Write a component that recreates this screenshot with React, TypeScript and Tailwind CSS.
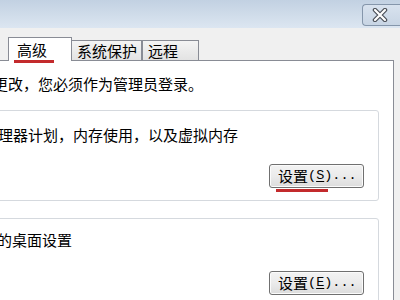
const cjk = { fontFamily: '"Noto Sans CJK SC", "Liberation Sans", sans-serif' }
const mono = { fontFamily: '"Liberation Mono", monospace' }

const CloseGlyph = () => (
  <svg width="16" height="14" viewBox="0 0 16 14">
    <path d="M3 2 L13 12 M13 2 L3 12" stroke="#4a4f57" strokeWidth="4.5" strokeLinecap="round" />
    <path d="M3 2 L13 12 M13 2 L3 12" stroke="#ffffff" strokeWidth="2.2" strokeLinecap="round" />
  </svg>
)

const Tab = ({ label, active, className }: { label: string; active?: boolean; className?: string }) =>
  active ? (
    <div
      className={`relative z-10 -mb-px flex h-[24px] items-start border border-b-0 border-[#898c95] bg-white pl-[8px] pt-[2px] text-[15px] leading-[20px] text-black ${className ?? ''}`}
    >
      {label}
      <div className="absolute left-[5px] top-[22px] h-[3px] w-[40px] bg-[#c32a2c]" />
    </div>
  ) : (
    <div
      className={`flex h-[20px] items-center border border-b-0 border-[#898c95] bg-gradient-to-b from-[#f4f4f4] to-[#e3e3e3] pl-[5px] text-[15px] leading-[18px] text-black ${className ?? ''}`}
    >
      {label}
    </div>
  )

const SetupButton = ({ hotkey, marked }: { hotkey: string; marked?: boolean }) => (
  <div className="flex justify-end pr-[14px]">
    <div className="relative">
      <button className="flex h-[24px] w-[95px] items-center rounded-[3px] border border-[#707070] bg-gradient-to-b from-[#f3f3f3] via-[#ebebeb] to-[#dcdcdc] pl-[8px] text-[15px] leading-[18px] text-black shadow-[inset_0_0_0_1px_#fbfbfb]">
        设置
        <span className="text-[13.5px]" style={mono}>
          (<span className="underline underline-offset-[2px]">{hotkey}</span>)...
        </span>
      </button>
      {marked && <div className="absolute left-[7px] top-[25px] h-[3px] w-[52px] bg-[#c32a2c]" />}
    </div>
  </div>
)

export default function App() {
  return (
    <div className="relative h-[300px] w-[400px] overflow-hidden bg-[#f0f0f0]" style={cjk}>
      {/* title bar */}
      <div className="flex h-[28px] justify-end bg-gradient-to-b from-[#c2d1e2] to-[#dce6f1]">
        <div className="mt-[4px] flex h-[22px] w-[38px] items-center justify-center rounded-l-[4px] border border-r-0 border-[#8596ab] bg-gradient-to-b from-[#d8e2ee] to-[#c8d5e4] pr-[4px]">
          <CloseGlyph />
        </div>
      </div>

      {/* tabs */}
      <div className="flex h-[32px] items-end pl-[8px]">
        <Tab label="高级" active className="w-[64px]" />
        <Tab label="系统保护" className="w-[70px] border-l-0" />
        <Tab label="远程" className="w-[57px]" />
      </div>

      {/* panel */}
      <div className="-ml-[10px] mr-[6px] h-[260px] border border-[#898c95] bg-white">
        <p className="pl-[2px] pt-[13px] text-[15px] leading-[20px] text-black whitespace-nowrap">
          更改，您必须作为管理员登录。
        </p>

        <div className="mr-[14px] mt-[16px] h-[91px] rounded-[3px] border border-[#d5d9de]">
          <p className="pl-[6px] pt-[14px] text-[15px] leading-[20px] text-black whitespace-nowrap">
            理器计划，内存使用，以及虚拟内存
          </p>
          <div className="mt-[19px]">
            <SetupButton hotkey="S" marked />
          </div>
        </div>

        <div className="mr-[14px] mt-[17px] h-[120px] rounded-[3px] border border-[#d5d9de]">
          <p className="pl-[5px] pt-[11px] text-[15px] leading-[20px] text-black whitespace-nowrap">
            的桌面设置
          </p>
          <div className="mt-[21px]">
            <SetupButton hotkey="E" />
          </div>
        </div>
      </div>
    </div>
  )
}
